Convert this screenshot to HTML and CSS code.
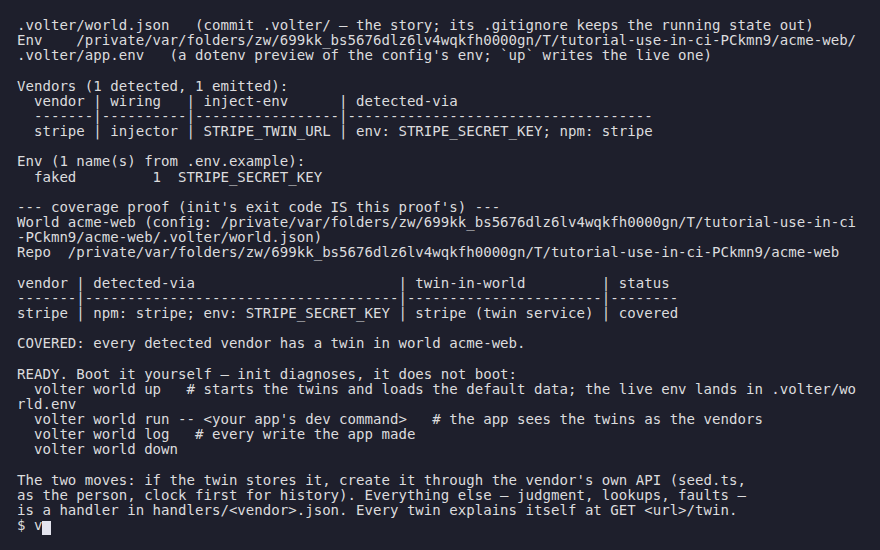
FILE: index.html
```html
<!DOCTYPE html>
<html lang="en">
<head>
<meta charset="utf-8">
<title>Terminal</title>
<link rel="stylesheet" href="styles.css">
</head>
<body>
<main class="terminal">
<pre class="output">.volter/world.json   (commit .volter/ — the story; its .gitignore keeps the running state out)
Env    /private/var/folders/zw/699kk_bs5676dlz6lv4wqkfh0000gn/T/tutorial-use-in-ci-PCkmn9/acme-web/
.volter/app.env   (a dotenv preview of the config's env; `up` writes the live one)

Vendors (1 detected, 1 emitted):
  vendor | wiring   | inject-env      | detected-via
  -------|----------|-----------------|------------------------------------
  stripe | injector | STRIPE_TWIN_URL | env: STRIPE_SECRET_KEY; npm: stripe

Env (1 name(s) from .env.example):
  faked         1  STRIPE_SECRET_KEY

--- coverage proof (init's exit code IS this proof's) ---
World acme-web (config: /private/var/folders/zw/699kk_bs5676dlz6lv4wqkfh0000gn/T/tutorial-use-in-ci
-PCkmn9/acme-web/.volter/world.json)
Repo  /private/var/folders/zw/699kk_bs5676dlz6lv4wqkfh0000gn/T/tutorial-use-in-ci-PCkmn9/acme-web

vendor | detected-via                        | twin-in-world         | status
-------|-------------------------------------|-----------------------|--------
stripe | npm: stripe; env: STRIPE_SECRET_KEY | stripe (twin service) | covered

COVERED: every detected vendor has a twin in world acme-web.

READY. Boot it yourself — init diagnoses, it does not boot:
  volter world up   # starts the twins and loads the default data; the live env lands in .volter/wo
rld.env
  volter world run -- &lt;your app's dev command&gt;   # the app sees the twins as the vendors
  volter world log   # every write the app made
  volter world down

The two moves: if the twin stores it, create it through the vendor's own API (seed.ts,
as the person, clock first for history). Everything else — judgment, lookups, faults —
is a handler in handlers/&lt;vendor&gt;.json. Every twin explains itself at GET &lt;url&gt;/twin.
$ v<span class="cursor"> </span></pre>
</main>
</body>
</html>
```
FILE: styles.css
```css
html, body {
  margin: 0;
  padding: 0;
  background: #1e1f2c;
}

.terminal {
  width: 880px;
  height: 550px;
  overflow: hidden;
  background: #1e1f2c;
  box-sizing: border-box;
  padding: 18px 0 0 17px;
}

.output {
  margin: 0;
  font-family: "DejaVu Sans Mono", "Liberation Mono", monospace;
  font-size: 14.08px;
  line-height: 15.15px;
  color: #dcdcde;
  white-space: pre;
}

.cursor {
  display: inline-block;
  width: 8.5px;
  height: 14px;
  vertical-align: -3px;
  background: #e4e4ee;
}
```
